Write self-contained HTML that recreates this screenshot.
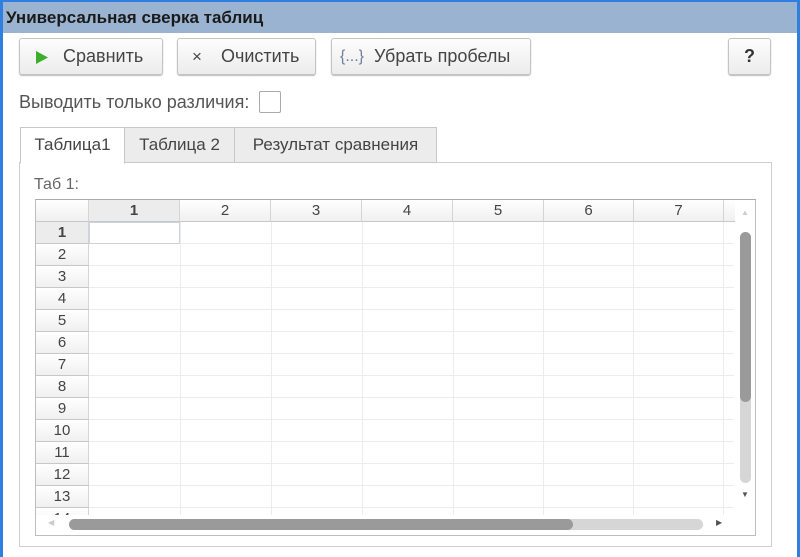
<!DOCTYPE html>
<html><head><meta charset="utf-8"><style>
*{margin:0;padding:0;box-sizing:border-box}
body{width:800px;height:557px;background:#fff;position:relative;overflow:hidden;font-family:"Liberation Sans",sans-serif;color:#444}
.a{position:absolute}
.btn{position:absolute;top:38px;height:37px;border:1px solid #c4c4c4;border-radius:3px;background:linear-gradient(#fdfdfd,#ececec);box-shadow:0 1px 1px #bbb;font-size:18px;line-height:35px;color:#444}
.tab{position:absolute;top:127px;height:36px;border:1px solid #c8c8c8;background:#ececec;font-size:17px;line-height:34px;text-align:center;color:#444}
.hd{position:absolute;background:linear-gradient(#fff,#f0f0f0);border-right:1px solid #d4d4d4;border-bottom:1px solid #c8c8c8;font-size:15px;text-align:center;color:#444}
</style></head><body>
<div class="a" style="left:0;top:0;width:800px;height:557px;border:2px solid #2f7fe0;border-width:2px 3px 0 3px"></div>
<div class="a" style="left:3px;top:2px;width:794px;height:31px;background:#99b3d0;font-weight:bold;font-size:17px;line-height:31px;padding-left:3px;color:#1a1a1a">Универсальная сверка таблиц</div>
<div class="btn" style="left:19px;width:144px"><svg class="a" style="left:16px;top:12px" width="12" height="13"><path d="M0 0L12 6.5L0 13Z" fill="#3cae2a"/></svg><span class="a" style="left:43px">Сравнить</span></div>
<div class="btn" style="left:177px;width:139px"><span class="a" style="left:14px;font-size:17px">×</span><span class="a" style="left:43px">Очистить</span></div>
<div class="btn" style="left:331px;width:200px"><span class="a" style="left:8px;font-size:16px;color:#6a7f9a">{...}</span><span class="a" style="left:42px">Убрать пробелы</span></div>
<div class="btn" style="left:728px;width:43px;text-align:center;font-weight:bold;color:#333">?</div>
<div class="a" style="left:19px;top:91px;font-size:18px;line-height:22px;color:#555">Выводить только различия:</div>
<div class="a" style="left:259px;top:91px;width:22px;height:22px;border:1px solid #aaa;border-radius:2px;background:#fff"></div>
<div class="a" style="left:19px;top:162px;width:753px;height:385px;border:1px solid #cfcfcf"></div>
<div class="tab" style="left:20px;width:105px;background:#fff;border-bottom-color:#fff;height:37px">Таблица1</div>
<div class="tab" style="left:124px;width:111px">Таблица 2</div>
<div class="tab" style="left:234px;width:203px">Результат сравнения</div>
<div class="a" style="left:34px;top:176px;font-size:16px;color:#666">Таб 1:</div>
<div class="a" style="left:35px;top:199px;width:721px;height:337px;border:1px solid #bdbdbd;border-top-color:#aaa;overflow:hidden">
<div class="a" style="left:0;top:0;width:699px;height:315px;overflow:hidden">
<div class="hd" style="left:0;top:0;width:53px;height:22px"></div>
<div class="hd" style="left:53px;top:0;width:91px;height:22px;line-height:21px;font-weight:bold;background:#ececec">1</div>
<div class="hd" style="left:144px;top:0;width:91px;height:22px;line-height:21px">2</div>
<div class="hd" style="left:235px;top:0;width:91px;height:22px;line-height:21px">3</div>
<div class="hd" style="left:326px;top:0;width:91px;height:22px;line-height:21px">4</div>
<div class="hd" style="left:417px;top:0;width:91px;height:22px;line-height:21px">5</div>
<div class="hd" style="left:508px;top:0;width:90px;height:22px;line-height:21px">6</div>
<div class="hd" style="left:598px;top:0;width:90px;height:22px;line-height:21px">7</div>
<div class="hd" style="left:688px;top:0;width:20px;height:22px"></div>
<div class="a" style="left:53px;top:22px;width:645px;height:293px;background:repeating-linear-gradient(180deg,#fff 0 21px,#ececec 21px 22px)"></div>
<div class="a" style="left:144px;top:22px;width:1px;height:293px;background:#ececec"></div>
<div class="a" style="left:235px;top:22px;width:1px;height:293px;background:#ececec"></div>
<div class="a" style="left:326px;top:22px;width:1px;height:293px;background:#ececec"></div>
<div class="a" style="left:417px;top:22px;width:1px;height:293px;background:#ececec"></div>
<div class="a" style="left:507px;top:22px;width:1px;height:293px;background:#ececec"></div>
<div class="a" style="left:597px;top:22px;width:1px;height:293px;background:#ececec"></div>
<div class="a" style="left:687px;top:22px;width:1px;height:293px;background:#ececec"></div>
<div class="a" style="left:53px;top:22px;width:91px;height:22px;border:1px solid #c8d4e4"></div>
<div class="a" style="left:0;top:22px;width:53px">
<div class="hd" style="position:relative;width:53px;height:22px;line-height:21px;font-weight:bold;background:#ececec">1</div>
<div class="hd" style="position:relative;width:53px;height:22px;line-height:21px">2</div>
<div class="hd" style="position:relative;width:53px;height:22px;line-height:21px">3</div>
<div class="hd" style="position:relative;width:53px;height:22px;line-height:21px">4</div>
<div class="hd" style="position:relative;width:53px;height:22px;line-height:21px">5</div>
<div class="hd" style="position:relative;width:53px;height:22px;line-height:21px">6</div>
<div class="hd" style="position:relative;width:53px;height:22px;line-height:21px">7</div>
<div class="hd" style="position:relative;width:53px;height:22px;line-height:21px">8</div>
<div class="hd" style="position:relative;width:53px;height:22px;line-height:21px">9</div>
<div class="hd" style="position:relative;width:53px;height:22px;line-height:21px">10</div>
<div class="hd" style="position:relative;width:53px;height:22px;line-height:21px">11</div>
<div class="hd" style="position:relative;width:53px;height:22px;line-height:21px">12</div>
<div class="hd" style="position:relative;width:53px;height:22px;line-height:21px">13</div>
<div class="hd" style="position:relative;width:53px;height:22px;line-height:21px">14</div>
</div>
</div>
<div class="a" style="left:704px;top:32px;width:11px;height:251px;background:#d6d6d6;border-radius:6px"></div>
<div class="a" style="left:704px;top:32px;width:11px;height:170px;background:#9a9a9a;border-radius:6px"></div>
<div class="a" style="left:705px;top:8px;font-size:8px;color:#ccc">▲</div>
<div class="a" style="left:705px;top:290px;font-size:8px;color:#555">▼</div>
<div class="a" style="left:33px;top:319px;width:634px;height:11px;background:#d6d6d6;border-radius:6px"></div>
<div class="a" style="left:33px;top:319px;width:504px;height:11px;background:#9a9a9a;border-radius:6px"></div>
<div class="a" style="left:12px;top:318px;font-size:8px;color:#ccc">◀</div>
<div class="a" style="left:680px;top:318px;font-size:8px;color:#555">▶</div>
</div>
</body></html>
